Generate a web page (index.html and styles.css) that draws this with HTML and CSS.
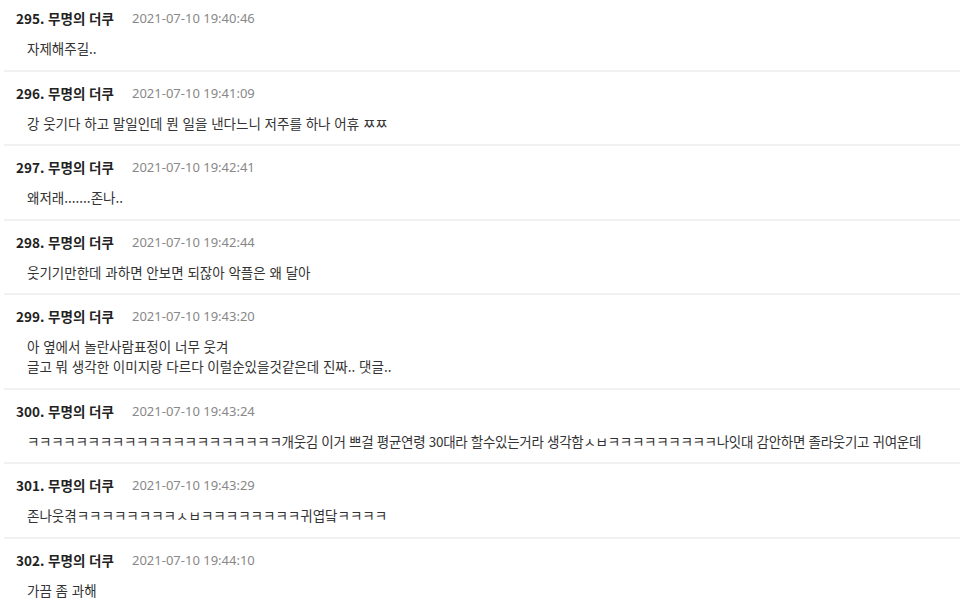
FILE: index.html
```html
<!DOCTYPE html>
<html lang="ko">
<head>
<meta charset="utf-8">
<link rel="stylesheet" href="styles.css">
</head>
<body>
<ul class="comments">
  <li class="comment">
    <div class="meta"><span class="name">295. 무명의 더쿠</span><span class="date">2021-07-10 19:40:46</span></div>
    <div class="text">자제해주길..</div>
  </li>
  <li class="comment">
    <div class="meta"><span class="name">296. 무명의 더쿠</span><span class="date">2021-07-10 19:41:09</span></div>
    <div class="text">강 웃기다 하고 말일인데 뭔 일을 낸다느니 저주를 하나 어휴 ㅉㅉ</div>
  </li>
  <li class="comment">
    <div class="meta"><span class="name">297. 무명의 더쿠</span><span class="date">2021-07-10 19:42:41</span></div>
    <div class="text">왜저래.......존나..</div>
  </li>
  <li class="comment">
    <div class="meta"><span class="name">298. 무명의 더쿠</span><span class="date">2021-07-10 19:42:44</span></div>
    <div class="text">웃기기만한데 과하면 안보면 되잖아 악플은 왜 달아</div>
  </li>
  <li class="comment">
    <div class="meta"><span class="name">299. 무명의 더쿠</span><span class="date">2021-07-10 19:43:20</span></div>
    <div class="text">아 옆에서 놀란사람표정이 너무 웃겨<br>글고 뭐 생각한 이미지랑 다르다 이럴순있을것같은데 진짜.. 댓글..</div>
  </li>
  <li class="comment">
    <div class="meta"><span class="name">300. 무명의 더쿠</span><span class="date">2021-07-10 19:43:24</span></div>
    <div class="text tight">ㅋㅋㅋㅋㅋㅋㅋㅋㅋㅋㅋㅋㅋㅋㅋㅋㅋㅋㅋㅋㅋ개웃김 이거 쁘걸 평균연령 30대라 할수있는거라 생각함ㅅㅂㅋㅋㅋㅋㅋㅋㅋㅋㅋ나잇대 감안하면 졸라웃기고 귀여운데</div>
  </li>
  <li class="comment">
    <div class="meta"><span class="name">301. 무명의 더쿠</span><span class="date">2021-07-10 19:43:29</span></div>
    <div class="text">존나웃겪ㅋㅋㅋㅋㅋㅋㅋㅋㅅㅂㅋㅋㅋㅋㅋㅋㅋㅋ귀엽닼ㅋㅋㅋㅋ</div>
  </li>
  <li class="comment">
    <div class="meta"><span class="name">302. 무명의 더쿠</span><span class="date">2021-07-10 19:44:10</span></div>
    <div class="text">가끔 좀 과해</div>
  </li>
</ul>
</body>
</html>
```
FILE: styles.css
```css
html, body {
  margin: 0;
  padding: 0;
  background: #fff;
}
body {
  font-family: "Noto Sans CJK KR", "Noto Sans", sans-serif;
  color: #333;
}
.comments {
  list-style: none;
  margin: 0;
  padding: 0 0 0 4px;
}
.comment {
  padding: 11px 0 11.5px 12px;
  border-bottom: 2px solid #f1f1f1;
}
.comment:first-child {
  padding-top: 8px;
}
.meta {
  display: flex;
  align-items: center;
  gap: 18px;
  height: 20px;
}
.name {
  font-size: 13.5px;
  font-weight: 700;
  color: #222;
}
.date {
  font-size: 13px;
  color: #888;
  font-family: "Noto Sans", "Noto Sans CJK KR", sans-serif;
}
.text {
  margin-top: 10px;
  padding-left: 11px;
  font-size: 13.5px;
  line-height: 20px;
  color: #333;
}
.tight {
  letter-spacing: -0.3px;
}
```
